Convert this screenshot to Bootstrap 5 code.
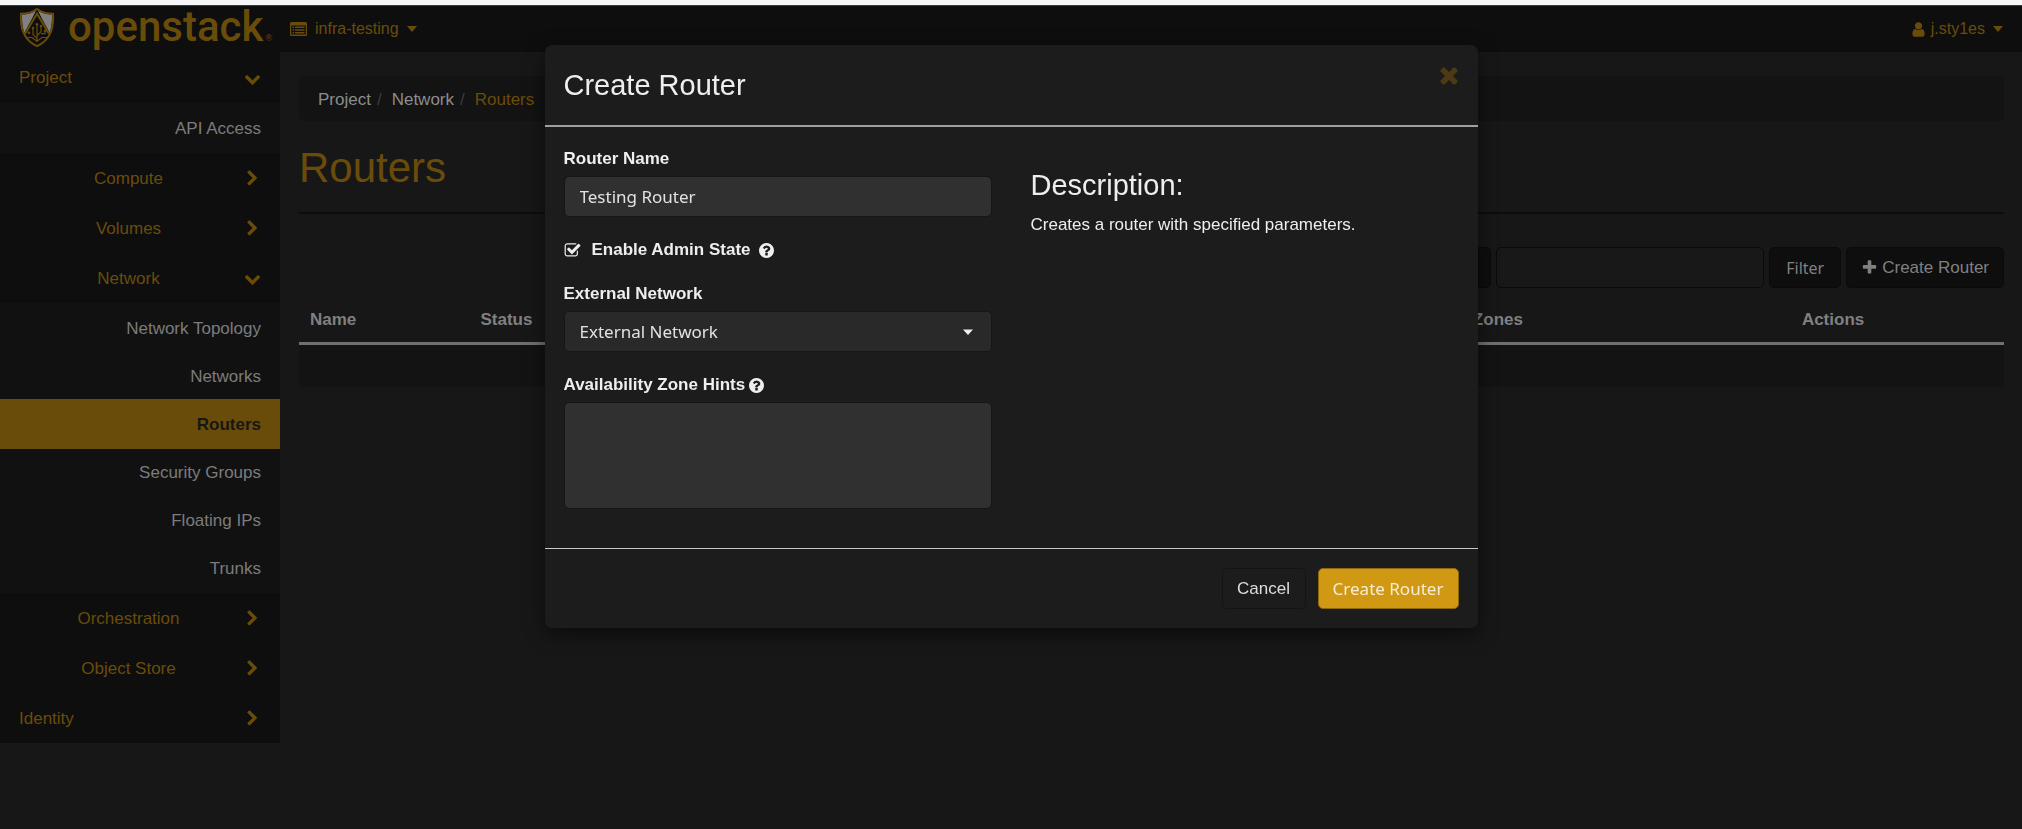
<!DOCTYPE html>
<html lang="en">
<head>
<meta charset="utf-8">
<meta name="viewport" content="width=device-width, initial-scale=1">
<title>Routers - OpenStack Dashboard</title>
<link href="https://cdn.jsdelivr.net/npm/bootstrap@5.3.0/dist/css/bootstrap.min.css" rel="stylesheet">
<style>
  :root { --gold: #6a4c0a; --dim: #808080; --ink: #0e0e0e; }
  body { background: #171717; color: var(--dim); font-family: "Liberation Sans", Arial, sans-serif; font-size: 17px; line-height: 24px; }
  a { color: inherit; text-decoration: none; }
  .icon { width: 17px; height: 17px; fill: currentColor; flex: none; }
  .icon-list { height: 14px; }
  .caret { width: 10px; height: 6px; fill: currentColor; flex: none; }

  .browser-edge { height: 6px; background: #f4f6f8; border-bottom: 1px solid #3a3b3c; }
  .topbar { height: 46px; background: var(--ink); color: var(--gold); padding: 0 19px 0 0; font-size: 16px; }
  .brand-link { width: 280px; padding-left: 19px; height: 46px; }
  .crest { width: 36px; height: 40px; margin: 0 13px 4px 0; }
  .wordmark { font: 500 42px/42px Roboto, sans-serif; padding-bottom: 4px; }
  .reg { font-size: 9px; line-height: 9px; margin: 18px 0 0 2px; }
  .project-menu { padding-left: 10px; }

  .side { width: 280px; background: var(--ink); color: var(--gold); flex: none; }
  .side-head { height: 50px; padding: 1px 19px 0; display: flex; align-items: center; }
  .side-head.first { height: 51px; }
  .side-head span { flex: 1; margin-right: 6px; }
  .side-sub { background: #111; color: #7c7c7c; }
  .side-sub a { display: flex; align-items: center; justify-content: flex-end; height: 50px; padding: 1px 19px 0; }
  .side-sub a + a { margin-top: -2px; }
  .side-sub a.active { background: var(--gold); color: #171717; font-weight: 700; position: relative; }

  .content { padding: 24px 18px 24px 19px; }
  .crumbs { background: #131313; border-radius: 5px; height: 45px; padding: 2px 20px 0 19px; margin: 0; color: #8c8c8c; --bs-breadcrumb-divider-color: #3c3c3c; --bs-breadcrumb-item-active-color: var(--gold); }
  .crumbs .breadcrumb-item + .breadcrumb-item { padding-left: 6px; }
  .crumbs .breadcrumb-item + .breadcrumb-item::before { padding-right: 10px; }
  h1 { font-size: 42px; line-height: 46px; font-weight: 400; color: var(--gold); margin: 24px 0 0; padding-bottom: 21px; border-bottom: 2px solid #0d0d0d; }
  .tools { margin-top: 33px; gap: 5px; }
  .tools .btn, .tools .form-select, .tools .form-control { height: 41px; border: 1px solid #0a0a0a; border-radius: 5px; color: var(--dim); font-size: 17px; line-height: 24px; padding: 0 14px; }
  .tools .btn, .tools .form-select { background-color: var(--ink); }
  .tools .form-select { width: 180px; }
  .tools .form-control { width: 268px; background: #181818; }
  .tools .btn-filter { width: 72px; font-family: "Noto Sans", sans-serif; font-size: 16px; }

  .routers { margin: 8px 0 0; width: 100%; table-layout: fixed; }
  .routers th { padding: 12px 11px 10px; font-weight: 700; height: 46px; border-bottom: 3px solid #707070; }
  .routers td { height: 43px; background: #131313; }
  .w-name { width: 10%; } .w-status { width: 12%; } .w-ext { width: 20%; } .w-admin { width: 20.7%; } .w-actions { width: 12.5%; }

  .modal { --bs-modal-width: 933px; padding: 0; }
  .modal-dialog { margin: 45px auto; max-width: 933px; }
  .modal-content { background: #1c1c1c; color: #eee; border: 0; border-radius: 7px; box-shadow: 0 6px 19px rgba(0,0,0,.5); }
  .modal-header { height: 82px; padding: 0 16px 0 19px; border-bottom: 2px solid #a0a0a0; border-radius: 0; align-items: flex-start; }
  .modal-title, .side-note h2 { font-size: 29px; line-height: 40px; font-weight: 400; }
  .modal-title { margin-top: 20px; }
  .dismiss { margin-top: 17px; color: #4d3a15; background: none; border: 0; padding: 0; line-height: 0; }
  .dismiss .icon { width: 26px; height: 26px; }
  .modal-body { padding: 20px 19px 39px; }
  .modal-body .row { --bs-gutter-x: 39px; }
  .modal-body label { font-weight: 700; display: flex; align-items: center; margin-bottom: 5px; height: 24px; }
  .modal-body label .icon { width: 15px; height: 15px; }
  .field { background-color: #303030; border: 1px solid #161616; border-radius: 5px; color: #e2e2e2; font: 400 17px/24px "Noto Sans", sans-serif; padding: 0 15px; height: 41px; margin-bottom: 21px; }
  .field:focus { background-color: #303030; color: #e2e2e2; }
  select.field { background: #292929 url("data:image/svg+xml,%3Csvg xmlns='http://www.w3.org/2000/svg' viewBox='0 0 10 6'%3E%3Cpath fill='%23eee' d='M0 .5h10L5 6z'/%3E%3C/svg%3E") no-repeat right 18px center / 10px 6px; }
  textarea.field { height: 107px; margin: 0; resize: none; }
  .tick { appearance: none; width: 17px; height: 17px; margin: 0 11px 0 0; background: url("data:image/svg+xml,%3Csvg xmlns='http://www.w3.org/2000/svg' viewBox='0 0 1792 1792'%3E%3Cpath fill='%23eee' d='M1472 930v318q0 119-84.5 203.5t-203.5 84.5h-832q-119 0-203.5-84.5t-84.5-203.5v-832q0-119 84.5-203.5t203.5-84.5h832q63 0 117 25 15 7 18 23 3 17-9 29l-49 49q-10 10-23 10-3 0-9-2-23-6-45-6h-832q-66 0-113 47t-47 113v832q0 66 47 113t113 47h832q66 0 113-47t47-113v-254q0-13 9-22l64-64q10-10 23-10 6 0 12 3 20 8 20 29zm231-489l-814 814q-24 24-57 24t-57-24l-430-430q-24-24-24-57t24-57l110-110q24-24 57-24t57 24l263 263 647-647q24-24 57-24t57 24l110 110q24 24 24 57t-24 57z'/%3E%3C/svg%3E") center / 100% no-repeat; }
  .modal-body label.tick-line { margin-bottom: 20px; }
  .side-note { padding-top: 18px; }
  .side-note h2 { margin: 0 0 8px; }
  .side-note p { font-size: 17px; margin: 0; }
  .modal-footer { border-top: 1px solid #c8c8c8; border-radius: 0; padding: 19px 19px; gap: 12px; }
  .modal-footer .btn { height: 41px; margin: 0; padding: 0; border-radius: 5px; line-height: 24px; }
  .btn-cancel { width: 84px; font-size: 17px; color: #ddd; border: 1px solid #141414; }
  .modal-footer .btn-go { width: 141px; font: 400 17px/24px "Noto Sans", sans-serif; color: #f7ecd3; background: #d19813; border: 1px solid #8f680c; }
</style>
</head>
<body>
<svg class="d-none" xmlns="http://www.w3.org/2000/svg">
  <symbol id="right" viewBox="0 0 1792 1792"><path d="M1363 877l-742 742q-19 19-45 19t-45-19l-166-166q-19-19-19-45t19-45l531-531-531-531q-19-19-19-45t19-45l166-166q19-19 45-19t45 19l742 742q19 19 19 45t-19 45z"/></symbol>
  <symbol id="down" viewBox="0 0 1792 1792"><path d="M1683 808l-742 741q-19 19-45 19t-45-19l-742-741q-19-19-19-45.5t19-45.5l166-165q19-19 45-19t45 19l531 531 531-531q19-19 45-19t45 19l166 165q19 19 19 45.5t-19 45.5z"/></symbol>
  <symbol id="times" viewBox="0 0 1792 1792"><path d="M1490 1322q0 40-28 68l-136 136q-28 28-68 28t-68-28l-294-294-294 294q-28 28-68 28t-68-28l-136-136q-28-28-28-68t28-68l294-294-294-294q-28-28-28-68t28-68l136-136q28-28 68-28t68 28l294 294 294-294q28-28 68-28t68 28l136 136q28 28 28 68t-28 68l-294 294 294 294q28 28 28 68z"/></symbol>
  <symbol id="plus" viewBox="0 0 1792 1792"><path d="M1600 736v192q0 40-28 68t-68 28h-416v416q0 40-28 68t-68 28h-192q-40 0-68-28t-28-68v-416h-416q-40 0-68-28t-28-68v-192q0-40 28-68t68-28h416v-416q0-40 28-68t68-28h192q40 0 68 28t28 68v416h416q40 0 68 28t28 68z"/></symbol>
  <symbol id="user" viewBox="0 0 1792 1792"><path d="M1536 1399q0 109-62.5 187t-150.5 78h-854q-88 0-150.5-78t-62.5-187q0-85 8.5-160.5t31.5-152 58.5-131 94-89 134.5-34.5q131 128 313 128t313-128q76 0 134.5 34.5t94 89 58.5 131 31.5 152 8.5 160.5zm-256-887q0 159-112.5 271.5t-271.5 112.5-271.5-112.5-112.5-271.5 112.5-271.5 271.5-112.5 271.5 112.5 112.5 271.5z"/></symbol>
  <symbol id="help" viewBox="128 128 1536 1536"><path d="M1024 1376v-192q0-14-9-23t-23-9h-192q-14 0-23 9t-9 23v192q0 14 9 23t23 9h192q14 0 23-9t9-23zm256-672q0-88-55.5-163t-138.5-116-170-41q-243 0-371 213-15 24 8 42l132 100q7 6 19 6 16 0 25-12 53-68 86-92 34-24 86-24 48 0 85.5 26t37.5 59q0 38-20 61t-68 45q-63 28-115.5 86.5t-52.5 125.5v36q0 14 9 23t23 9h192q14 0 23-9t9-23q0-19 21.5-49.5t54.5-49.5q32-18 49-28.5t46-35 44.5-48 28-60.5 12.5-81zm384 192q0 209-103 385.5t-279.5 279.5-385.5 103-385.5-103-279.5-279.5-103-385.5 103-385.5 279.5-279.5 385.5-103 385.5 103 279.5 279.5 103 385.5z"/></symbol>
  <symbol id="list" viewBox="0 0 17 14"><path fill-rule="evenodd" d="M1.500 0h14A1.500 1.500 0 0 1 17 1.500v11a1.500 1.500 0 0 1-1.500 1.500h-14A1.500 1.500 0 0 1 0 12.500v-11A1.500 1.500 0 0 1 1.500 0zM1.200 3.500v9h14.600v-9zM2.500 4.500h1.500v1.500h-1.500zM5 4.500h9.500v1.500h-9.500zM2.500 7.200h1.500v1.500h-1.500zM5 7.200h9.500v1.500h-9.500zM2.500 9.900h1.500v1.500h-1.500zM5 9.900h9.500v1.500h-9.500z"/></symbol>
  <symbol id="caret" viewBox="0 0 10 6"><path d="M0 0h10L5 6z"/></symbol>
</svg>

<div class="browser-edge"></div>
<header class="topbar d-flex align-items-center">
  <a class="brand-link d-flex align-items-center" href="#" aria-label="openstack">
    <svg class="crest" viewBox="0 0 36 42" preserveAspectRatio="none" fill="none" stroke="#6a4c0a">
      <path fill="#808080" stroke="none" d="M3 8c5 0 9-1 14-4L6 29C3 21 3 14 3 8zM33 8c-5 0-9-1-14-4l11 25c3-8 3-15 3-21z"/>
      <path fill="#0e0e0e" stroke="#0e0e0e" stroke-width="2" d="M18 5L6 28l12 11 12-11z"/>
      <path stroke-width="2" d="M18 2c4 3 10 5 16 5 1 16-3 28-16 34C5 35 1 23 2 7c6 0 12-2 16-5z"/>
      <path stroke-width="2" d="M6 28L18 7l12 21"/>
      <path stroke-width="1.200" d="M18 37V18M18 33l-4-4v-7M18 30l4-4v-6M18 36l5-4h5M18 36l-5-4H8M22 28h4v-3"/>
      <g fill="#6a4c0a" stroke="none"><circle cx="18" cy="18" r="1.300"/><circle cx="14" cy="22" r="1.300"/><circle cx="22" cy="20" r="1.300"/><circle cx="26" cy="25" r="1.300"/><circle cx="10" cy="27" r="1.300"/></g>
    </svg>
    <span class="wordmark">openstack</span><span class="reg">®</span>
  </a>
  <a class="project-menu d-flex align-items-center" href="#"><svg class="icon icon-list"><use href="#list"/></svg><span class="ms-1 ps-1">infra-testing</span><svg class="caret ms-2"><use href="#caret"/></svg></a>
  <a class="d-flex align-items-center ms-auto" href="#"><svg class="icon"><use href="#user"/></svg><span class="ms-1">j.sty1es</span><svg class="caret ms-2"><use href="#caret"/></svg></a>
</header>

<div class="d-flex align-items-start">
  <nav class="side">
    <a class="side-head first" href="#"><span>Project</span><svg class="icon"><use href="#down"/></svg></a>
    <div class="side-sub"><a href="#">API Access</a></div>
    <a class="side-head text-center" href="#"><span>Compute</span><svg class="icon"><use href="#right"/></svg></a>
    <a class="side-head text-center" href="#"><span>Volumes</span><svg class="icon"><use href="#right"/></svg></a>
    <a class="side-head text-center" href="#"><span>Network</span><svg class="icon"><use href="#down"/></svg></a>
    <div class="side-sub">
      <a href="#">Network Topology</a>
      <a href="#">Networks</a>
      <a href="#" class="active">Routers</a>
      <a href="#">Security Groups</a>
      <a href="#">Floating IPs</a>
      <a href="#">Trunks</a>
    </div>
    <a class="side-head text-center" href="#"><span>Orchestration</span><svg class="icon"><use href="#right"/></svg></a>
    <a class="side-head text-center" href="#"><span>Object Store</span><svg class="icon"><use href="#right"/></svg></a>
    <a class="side-head" href="#"><span>Identity</span><svg class="icon"><use href="#right"/></svg></a>
  </nav>

  <main class="content flex-grow-1">
    <ol class="breadcrumb crumbs align-items-center">
      <li class="breadcrumb-item"><a href="#">Project</a></li>
      <li class="breadcrumb-item"><a href="#">Network</a></li>
      <li class="breadcrumb-item active">Routers</li>
    </ol>
    <h1>Routers</h1>
    <div class="tools d-flex justify-content-end">
      <select class="form-select" aria-label="Filter field"><option></option></select>
      <input class="form-control" type="text" aria-label="Filter value">
      <button class="btn btn-filter" type="button">Filter</button>
      <button class="btn d-flex align-items-center" type="button"><svg class="icon me-1"><use href="#plus"/></svg>Create Router</button>
    </div>
    <table class="routers">
      <thead><tr><th class="w-name">Name</th><th class="w-status">Status</th><th class="w-ext"></th><th class="w-admin"></th><th>Availability Zones</th><th class="w-actions">Actions</th></tr></thead>
      <tbody><tr><td colspan="6"></td></tr></tbody>
    </table>
  </main>
</div>

<div class="modal d-block" role="dialog" aria-labelledby="dlg">
  <div class="modal-dialog">
    <form class="modal-content">
      <div class="modal-header">
        <h3 class="modal-title" id="dlg">Create Router</h3>
        <button class="dismiss" type="button" aria-label="Close"><svg class="icon"><use href="#times"/></svg></button>
      </div>
      <div class="modal-body">
        <div class="row">
          <div class="col-6">
            <label for="rname">Router Name</label>
            <input class="form-control field" id="rname" type="text" value="Testing Router">
            <label class="tick-line"><input class="tick" type="checkbox" checked>Enable Admin State<svg class="icon ms-2"><use href="#help"/></svg></label>
            <label for="ext">External Network</label>
            <select class="form-select field" id="ext"><option>External Network</option></select>
            <label for="zones">Availability Zone Hints<svg class="icon ms-1"><use href="#help"/></svg></label>
            <textarea class="form-control field" id="zones"></textarea>
          </div>
          <div class="col-6 side-note">
            <h2>Description:</h2>
            <p>Creates a router with specified parameters.</p>
          </div>
        </div>
      </div>
      <div class="modal-footer">
        <button class="btn btn-cancel" type="button">Cancel</button>
        <button class="btn btn-go" type="submit">Create Router</button>
      </div>
    </form>
  </div>
</div>
<script src="https://cdn.jsdelivr.net/npm/bootstrap@5.3.0/dist/js/bootstrap.bundle.min.js"></script>
</body>
</html>
